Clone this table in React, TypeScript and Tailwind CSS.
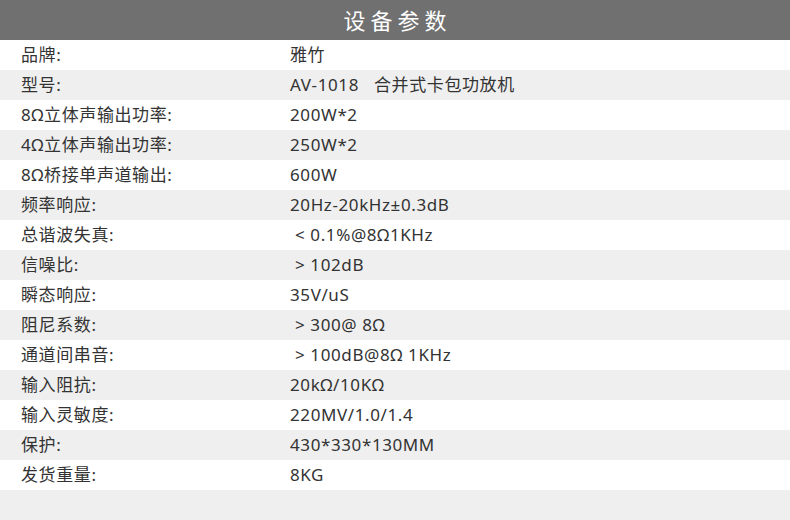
import React from "react";

const rows: [string, string][] = [
  ["品牌:", "雅竹"],
  ["型号:", "AV-1018\u00a0\u00a0 合并式卡包功放机"],
  ["8Ω立体声输出功率:", "200W*2"],
  ["4Ω立体声输出功率:", "250W*2"],
  ["8Ω桥接单声道输出:", "600W"],
  ["频率响应:", "20Hz-20kHz±0.3dB"],
  ["总谐波失真:", "\u00a0< 0.1%@8Ω1KHz"],
  ["信噪比:", "\u00a0> 102dB"],
  ["瞬态响应:", "35V/uS"],
  ["阻尼系数:", "\u00a0> 300@ 8Ω"],
  ["通道间串音:", "\u00a0> 100dB@8Ω 1KHz"],
  ["输入阻抗:", "20kΩ/10KΩ"],
  ["输入灵敏度:", "220MV/1.0/1.4"],
  ["保护:", "430*330*130MM"],
  ["发货重量:", "8KG"],
];

export default function App() {
  return (
    <div
      className="w-[790px] h-[520px] bg-[#efefef] flex flex-col text-[#333333]"
      style={{ fontFamily: '"Noto Sans", "Noto Sans CJK SC", sans-serif' }}
    >
      <div className="h-[40px] bg-[#707070] flex items-center justify-center text-white text-[22px] tracking-[5px] pl-[5px]">
        设备参数
      </div>
      {rows.map(([k, v], i) => (
        <div
          key={i}
          className={`h-[30px] flex items-center text-[17px] tracking-[0.6px] ${
            i % 2 === 0 ? "bg-white" : "bg-[#efefef]"
          }`}
        >
          <div className="w-[290px] pl-[21px] whitespace-pre">{k}</div>
          <div className="whitespace-pre">{v}</div>
        </div>
      ))}
    </div>
  );
}
